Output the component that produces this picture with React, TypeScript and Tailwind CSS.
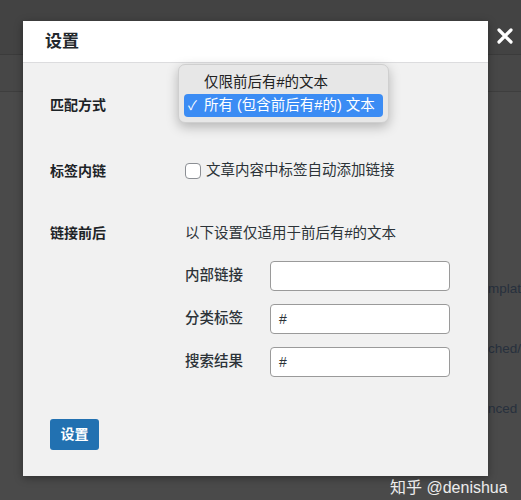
import React from 'react';

const font = { fontFamily: '"Liberation Sans", "Noto Sans CJK SC", sans-serif' };

const SubField = ({ label, value }: { label: string; value: string }) => (
  <div className="flex items-center h-[30px]">
    <span className="w-[85px] text-[14.5px] font-medium text-[#2c3338]">{label}</span>
    <div className="w-[180px] h-[30px] bg-white border border-[#9a9a9a] rounded-[4px] flex items-center px-[8px] text-[14px] text-[#2c3338]">
      {value}
    </div>
  </div>
);

const App: React.FC = () => {
  return (
    <div className="relative w-[521px] h-[500px] overflow-hidden bg-[#4a4a4a]" style={font}>
      {/* page behind the overlay */}
      <div className="h-[55px] bg-[#434343] border-b border-[#3b3b3b]" />
      <div className="h-[37px] bg-[#474747] border-b border-[#3e3e3e]" />
      <div className="flex flex-col pl-[488px] pt-[188px] gap-[42px] text-[13.5px] text-[#27303d] whitespace-nowrap leading-[18px]">
        <span>mplat</span>
        <span>ched/</span>
        <span>nced</span>
      </div>

      {/* close */}
      <button className="absolute left-[496px] top-[27px] w-[18px] h-[18px]">
        <svg viewBox="0 0 18 18" width="18" height="18">
          <path d="M3 3 L15 15 M15 3 L3 15" stroke="#ffffff" strokeWidth="3.2" strokeLinecap="round" />
        </svg>
      </button>

      {/* modal */}
      <div className="absolute left-[23px] top-[21px] w-[465px] bg-[#f1f1f1] shadow-[0_2px_8px_rgba(0,0,0,0.35)]">
        <div className="h-[42px] bg-white border-b border-[#dcdcde] flex items-center pl-[22px]">
          <span className="text-[17px] font-bold text-[#23282d]">设置</span>
        </div>

        <div className="pl-[27px] pt-[25px] pb-[26px]">
          <div className="flex items-center h-[34px]">
            <span className="w-[135px] text-[14px] font-bold text-[#1d2327]">匹配方式</span>
          </div>

          <div className="flex items-center h-[34px] mt-[32px]">
            <span className="w-[135px] text-[14px] font-bold text-[#1d2327]">标签内链</span>
            <div className="flex items-center gap-[5px]">
              <span className="w-[16px] h-[16px] rounded-[4px] border border-[#8c8f94] bg-white" />
              <span className="text-[14.5px] text-[#2c3338]">文章内容中标签自动添加链接</span>
            </div>
          </div>

          <div className="flex mt-[35px]">
            <span className="w-[135px] h-[20px] leading-[20px] text-[14px] font-bold text-[#1d2327]">链接前后</span>
            <div className="flex flex-col">
              <span className="h-[20px] leading-[20px] text-[14.5px] text-[#2c3338]">以下设置仅适用于前后有#的文本</span>
              <div className="flex flex-col gap-[13px] mt-[18px]">
                <SubField label="内部链接" value="" />
                <SubField label="分类标签" value="#" />
                <SubField label="搜索结果" value="#" />
              </div>
            </div>
          </div>

          <button className="mt-[42px] w-[49px] h-[31px] bg-[#2271b1] rounded-[3px] text-white text-[14px] font-bold flex items-center justify-center">
            设置
          </button>
        </div>
      </div>

      {/* native select popup */}
      <div className="absolute left-[178px] top-[64px] w-[211px] h-[59px] rounded-[7px] bg-[#e7e7e7] border border-[#cfcfcf] shadow-[0_4px_12px_rgba(0,0,0,0.25)] px-[5px] pt-[6px]">
        <div className="h-[23px] flex items-center pl-[20px] text-[14.5px] text-[#222]">仅限前后有#的文本</div>
        <div className="h-[23px] flex items-center rounded-[4px] bg-[#3b8cf4] text-white text-[14.5px]">
          <span className="w-[20px] pl-[4px] text-[13px]">✓</span>
          <span>所有 (包含前后有#的) 文本</span>
        </div>
      </div>

      <span className="absolute left-[390px] top-[476px] text-[16px] text-white/90 whitespace-nowrap">知乎 @denishua</span>
    </div>
  );
};

export default App;
